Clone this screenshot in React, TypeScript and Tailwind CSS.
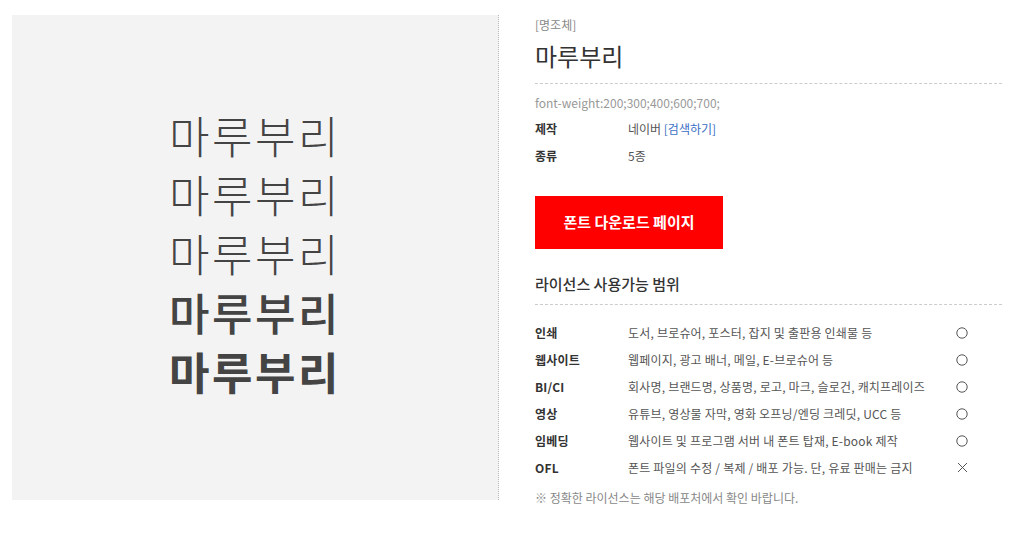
const font = { fontFamily: '"Noto Sans CJK KR", "Noto Sans", sans-serif' }

const weights = ["font-extralight", "font-extralight", "font-light", "font-medium", "font-bold"]

const licenses = [
  { name: "인쇄", desc: "도서, 브로슈어, 포스터, 잡지 및 출판용 인쇄물 등", ok: true },
  { name: "웹사이트", desc: "웹페이지, 광고 배너, 메일, E-브로슈어 등", ok: true },
  { name: "BI/CI", desc: "회사명, 브랜드명, 상품명, 로고, 마크, 슬로건, 캐치프레이즈", ok: true },
  { name: "영상", desc: "유튜브, 영상물 자막, 영화 오프닝/엔딩 크레딧, UCC 등", ok: true },
  { name: "임베딩", desc: "웹사이트 및 프로그램 서버 내 폰트 탑재, E-book 제작", ok: true },
  { name: "OFL", desc: "폰트 파일의 수정 / 복제 / 배포 가능. 단, 유료 판매는 금지", ok: false },
]

export default function App() {
  return (
    <div className="w-[1024px] h-[535px] bg-white flex pl-[12px] pt-[15px]" style={font}>
      <div className="w-[487px] h-[485px] bg-[#f3f3f3] border-r border-dotted border-[#bbbbbb] flex flex-col items-center justify-center pb-[8px]">
        {weights.map((w, i) => (
          <div key={i} className={`text-[44px] leading-[59px] tracking-[2.5px] text-[#444444] ${w}`}>
            마루부리
          </div>
        ))}
      </div>

      <div className="ml-[36px] w-[467px] flex flex-col">
        <div className="text-[12px] leading-[18px] text-[#888888] mt-[1px]">[명조체]</div>
        <h1 className="text-[24px] leading-[32px] text-[#333333] mt-[6px]">마루부리</h1>
        <div className="border-t border-dashed border-[#cccccc] mt-[11px]" />

        <div className="text-[12px] leading-[18px] text-[#999999] mt-[10px]">font-weight:200;300;400;600;700;</div>
        <div className="flex text-[12px] leading-[18px] mt-[8px]">
          <span className="w-[93px] font-semibold text-[#333333]">제작</span>
          <span className="text-[#555555]">
            네이버 <span className="text-[#3a6fc4]">[검색하기]</span>
          </span>
        </div>
        <div className="flex text-[12px] leading-[18px] mt-[9px]">
          <span className="w-[93px] font-semibold text-[#333333]">종류</span>
          <span className="text-[#555555]">5종</span>
        </div>

        <button className="mt-[31px] w-[188px] h-[53px] bg-[#ff0000] text-white text-[15px] font-bold flex items-center justify-center">
          폰트 다운로드 페이지
        </button>

        <div className="text-[15px] leading-[22px] text-[#333333] font-medium mt-[24px]">라이선스 사용가능 범위</div>
        <div className="border-t border-dashed border-[#cccccc] mt-[9px]" />

        <div className="flex flex-col mt-[14px]">
          {licenses.map((l) => (
            <div key={l.name} className="flex items-center h-[27px] text-[12px] tracking-[0.2px]">
              <span className="w-[93px] font-semibold text-[#333333]">{l.name}</span>
              <span className="w-[327px] text-[#555555]">{l.desc}</span>
              <span className="w-[14px] flex justify-center text-[#555555]">
                {l.ok ? (
                  <svg width="12" height="12" viewBox="0 0 12 12">
                    <circle cx="6" cy="6" r="5.2" fill="none" stroke="#555555" strokeWidth="1" />
                  </svg>
                ) : (
                  <svg width="11" height="11" viewBox="0 0 11 11">
                    <path d="M1 1L10 10M10 1L1 10" stroke="#555555" strokeWidth="1" />
                  </svg>
                )}
              </span>
            </div>
          ))}
        </div>

        <div className="text-[12px] leading-[18px] text-[#888888] mt-[8px]">※ 정확한 라이선스는 해당 배포처에서 확인 바랍니다.</div>
      </div>
    </div>
  )
}
